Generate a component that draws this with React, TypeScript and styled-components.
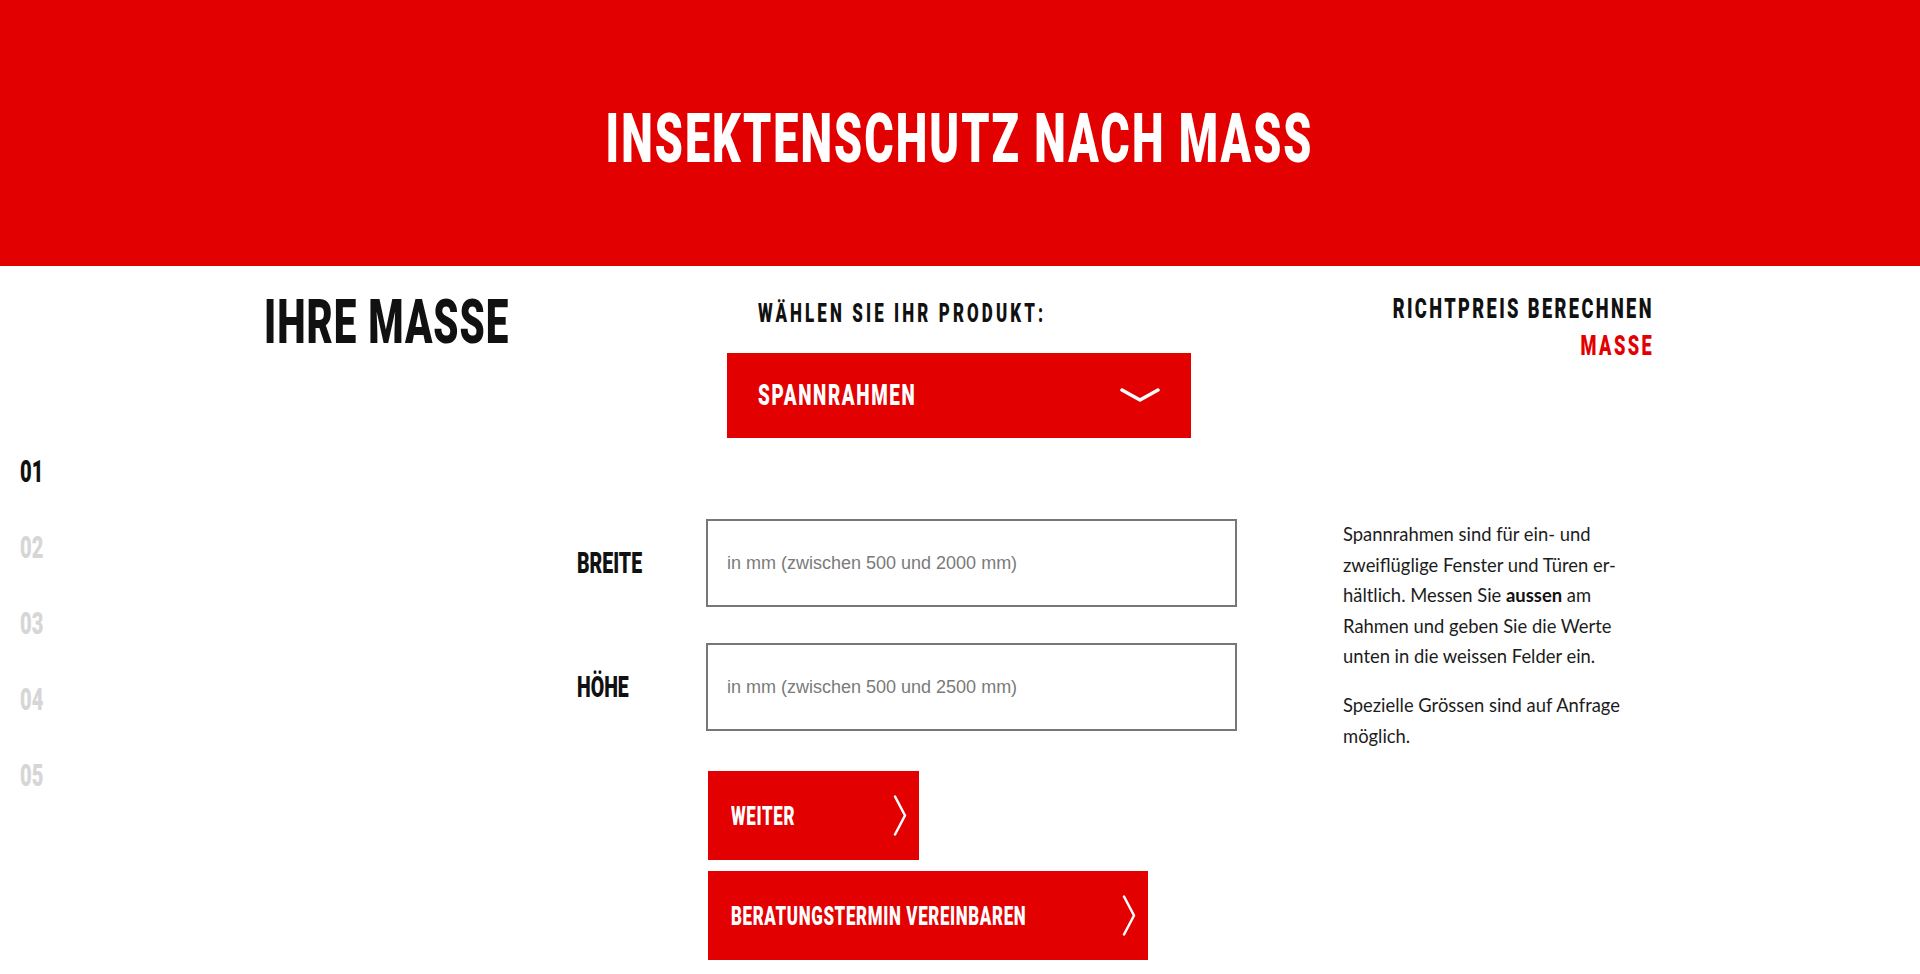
import React from 'react';
import styled, { createGlobalStyle } from 'styled-components';

const RED = '#e30000';
const HEAD_FONT = `'Roboto', 'Liberation Sans', sans-serif`;

const GlobalStyle = createGlobalStyle`
  html, body {
    margin: 0;
    padding: 0;
    background: #fff;
  }

  * {
    box-sizing: border-box;
  }
`;

// the original uses a condensed DIN face, so we squeeze Roboto horizontally
const Cond = styled.span<{ $origin?: 'left' | 'center' | 'right' }>`
  display: inline-block;
  min-width: 0;
  white-space: nowrap;
  transform: scaleX(0.65);
  transform-origin: ${({ $origin }) => $origin ?? 'left'} center;
`;

const Header = styled.header`
  height: 266px;
  padding-top: 10px;
  background: ${RED};
  display: flex;
  align-items: center;
  justify-content: center;
`;

const Title = styled.h1`
  margin: 0;
  color: #fff;
  font-family: ${HEAD_FONT};
  font-weight: 900;
  font-size: 69px;
  line-height: 1;
  letter-spacing: 3.2px;
`;

const Body = styled.main`
  display: flex;
  align-items: flex-start;
`;

const StepNav = styled.ol`
  list-style: none;
  margin: 0;
  padding: 168px 0 0 20px;
  width: 264px;
  flex: none;
`;

const Step = styled.li<{ $active?: boolean }>`
  font-family: ${HEAD_FONT};
  font-weight: 900;
  font-size: 31px;
  line-height: 76px;
  color: ${({ $active }) => ($active ? '#111' : '#d6d6d6')};
`;

const Content = styled.div`
  width: 1389px;
  padding-top: 24px;
  display: flex;
  flex-direction: column;
`;

const TopRow = styled.div`
  display: flex;
  align-items: flex-start;
`;

const SectionTitle = styled.h2`
  margin: 1px 0 0;
  width: 463px;
  color: #111;
  font-family: ${HEAD_FONT};
  font-weight: 900;
  font-size: 62px;
  line-height: 1;
  letter-spacing: 1.5px;
`;

const Picker = styled.div`
  width: 464px;
  margin-top: 10px;
`;

const PickerLabel = styled.h3`
  margin: 0;
  padding-left: 31px;
  color: #111;
  font-family: ${HEAD_FONT};
  font-weight: 900;
  font-size: 26px;
  line-height: 1;
  letter-spacing: 4.8px;
`;

const Select = styled.button`
  margin-top: 27px;
  width: 100%;
  height: 85px;
  padding: 0 31px;
  border: none;
  background: ${RED};
  color: #fff;
  display: flex;
  align-items: center;
  justify-content: space-between;
  font-family: ${HEAD_FONT};
  font-weight: 900;
  font-size: 29px;
  line-height: 1;
  letter-spacing: 2.5px;
  cursor: pointer;

  svg {
    flex: none;
  }
`;

const PriceTitle = styled.div`
  margin-left: auto;
  text-align: right;
  font-family: ${HEAD_FONT};
  font-weight: 900;
  font-size: 28px;
  line-height: 37px;
  letter-spacing: 3.7px;
  color: #111;
`;

const PriceLine = styled.div<{ $red?: boolean }>`
  margin-right: -1px;
  color: ${({ $red }) => ($red ? RED : '#111')};
`;

const FormArea = styled.div`
  margin-top: 81px;
  display: flex;
  align-items: flex-start;
`;

const FormColumn = styled.div`
  margin-left: 313px;
  width: 660px;
  display: flex;
  flex-direction: column;
`;

const FieldRow = styled.label`
  display: flex;
  align-items: center;

  & + & {
    margin-top: 36px;
  }
`;

const FieldLabel = styled.span`
  width: 129px;
  color: #111;
  font-family: ${HEAD_FONT};
  font-weight: 900;
  font-size: 30px;
  line-height: 1;
`;

const Input = styled.input`
  width: 531px;
  height: 88px;
  padding: 0 19px;
  border: 2px solid #777;
  border-radius: 0;
  outline: none;
  font-family: 'Liberation Sans', Arial, sans-serif;
  font-size: 18px;
  color: #222;

  &::placeholder {
    color: #7a7a7a;
  }
`;

const ButtonStack = styled.div`
  margin-top: 40px;
  padding-left: 131px;
  display: flex;
  flex-direction: column;
  align-items: flex-start;
  gap: 11px;
`;

const ActionButton = styled.button<{ $wide?: boolean }>`
  width: ${({ $wide }) => ($wide ? '440px' : '211px')};
  height: 89px;
  padding: 0 12px 0 23px;
  border: none;
  background: ${RED};
  color: #fff;
  display: flex;
  align-items: center;
  justify-content: space-between;
  font-family: ${HEAD_FONT};
  font-weight: 900;
  font-size: 26px;
  line-height: 1;
  letter-spacing: 1px;
  cursor: pointer;

  ${Cond} {
    flex: 0 1 auto;
    overflow: visible;
  }

  svg {
    flex: none;
  }
`;

const Description = styled.div`
  margin-left: 106px;
  width: 310px;
  font-family: 'Lato', 'Open Sans', sans-serif;
  font-size: 18.4px;
  line-height: 30.6px;
  color: #1c1c1c;

  p {
    margin: 0 0 18px;
  }

  strong {
    font-weight: 700;
    color: #111;
  }
`;

const ChevronDown = () => (
  <svg width="40" height="15" viewBox="0 0 40 15" fill="none">
    <polyline points="2,2 20,12 38,2" stroke="#fff" strokeWidth="3.5" strokeLinecap="round" strokeLinejoin="round" />
  </svg>
);

const ChevronRight = () => (
  <svg width="14" height="41" viewBox="0 0 14 41" fill="none">
    <polyline points="2,1.5 12,20.5 2,39.5" stroke="#fff" strokeWidth="2.5" strokeLinecap="round" strokeLinejoin="round" />
  </svg>
);

const steps = ['01', '02', '03', '04', '05'];

const App = () => {
  return (
    <>
      <GlobalStyle />
      <Header>
        <Title>
          <Cond $origin="center">INSEKTENSCHUTZ NACH MASS</Cond>
        </Title>
      </Header>

      <Body>
        <StepNav>
          {steps.map((s, i) => (
            <Step key={s} $active={i === 0}>
              <Cond>{s}</Cond>
            </Step>
          ))}
        </StepNav>

        <Content>
          <TopRow>
            <SectionTitle>
              <Cond>IHRE MASSE</Cond>
            </SectionTitle>

            <Picker>
              <PickerLabel>
                <Cond>WÄHLEN SIE IHR PRODUKT:</Cond>
              </PickerLabel>
              <Select type="button">
                <Cond>SPANNRAHMEN</Cond>
                <ChevronDown />
              </Select>
            </Picker>

            <PriceTitle>
              <PriceLine>
                <Cond $origin="right">RICHTPREIS BERECHNEN</Cond>
              </PriceLine>
              <PriceLine $red>
                <Cond $origin="right">MASSE</Cond>
              </PriceLine>
            </PriceTitle>
          </TopRow>

          <FormArea>
            <FormColumn>
              <FieldRow>
                <FieldLabel>
                  <Cond>BREITE</Cond>
                </FieldLabel>
                <Input placeholder="in mm (zwischen 500 und 2000 mm)" />
              </FieldRow>
              <FieldRow>
                <FieldLabel>
                  <Cond>HÖHE</Cond>
                </FieldLabel>
                <Input placeholder="in mm (zwischen 500 und 2500 mm)" />
              </FieldRow>

              <ButtonStack>
                <ActionButton type="button">
                  <Cond>WEITER</Cond>
                  <ChevronRight />
                </ActionButton>
                <ActionButton type="button" $wide>
                  <Cond>BERATUNGSTERMIN VEREINBAREN</Cond>
                  <ChevronRight />
                </ActionButton>
              </ButtonStack>
            </FormColumn>

            <Description>
              <p>
                Spannrahmen sind für ein- und
                <br />
                zweiflüglige Fenster und Türen er-
                <br />
                hältlich. Messen Sie <strong>aussen</strong> am
                <br />
                Rahmen und geben Sie die Werte
                <br />
                unten in die weissen Felder ein.
              </p>
              <p>
                Spezielle Grössen sind auf Anfrage
                <br />
                möglich.
              </p>
            </Description>
          </FormArea>
        </Content>
      </Body>
    </>
  );
};

export default App;
